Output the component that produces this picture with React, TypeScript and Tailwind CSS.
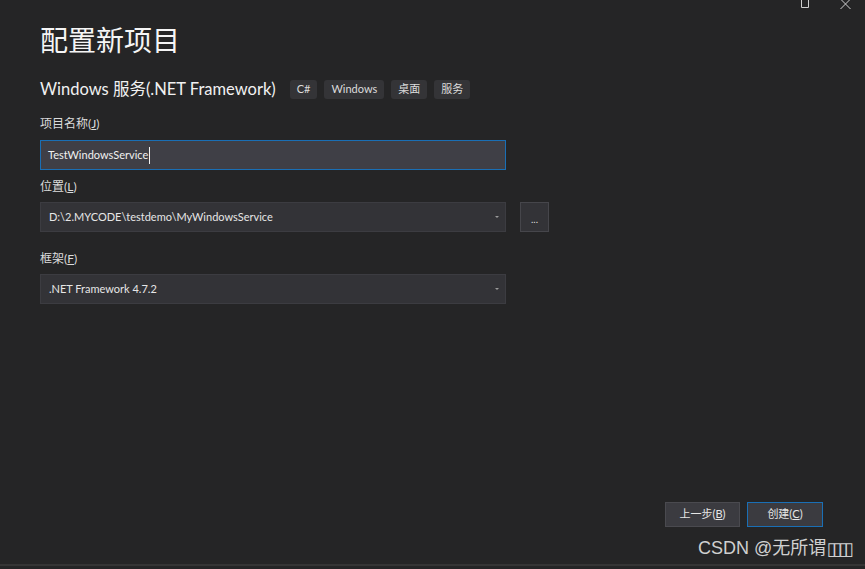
const font = "font-['Segoe_UI','Lato','Noto_Sans_CJK_SC',sans-serif]";

function Tag({ label }: { label: string }) {
  return (
    <span className="flex h-[19px] items-center rounded-[3px] bg-[#343437] px-[7px] text-[11px] text-[#dcdcdc]">
      {label}
    </span>
  );
}

function Caret() {
  return (
    <svg width="6" height="4" viewBox="0 0 6 4" className="mr-[5px]">
      <path d="M1 1h4L3 3z" fill="#9a9a9a" />
    </svg>
  );
}

function Select({ value }: { value: string }) {
  return (
    <div className="flex h-[30px] w-[466px] items-center justify-between border border-[#3c3c41] bg-[#333337] pl-[8px] text-[11px] text-[#e6e6e6]">
      <span>{value}</span>
      <Caret />
    </div>
  );
}

export default function App() {
  return (
    <div className={`${font} flex h-[569px] w-full flex-col bg-[#252526] text-[#f1f1f1]`}>
      {/* title bar controls */}
      <div className="flex h-[10px] items-start justify-end gap-[30px] pr-[14px]">
        <svg width="10" height="9" viewBox="0 0 10 9">
          <path d="M1.5 0v7.5h7V0" stroke="#cfcfcf" fill="none" />
        </svg>
        <svg width="11" height="9" viewBox="0 0 11 9">
          <path d="M0.5 -1l10 10M10.5 -1l-10 10" stroke="#cfcfcf" fill="none" />
        </svg>
      </div>

      <div className="flex flex-1 flex-col pl-[40px]">
        <h1 className="mt-[12px] text-[28px] leading-[36px] font-normal text-[#f5f5f5]">配置新项目</h1>

        <div className="mt-[19px] flex items-center">
          <span className="text-[16.5px] leading-[24px] text-[#f1f1f1]">Windows 服务(.NET Framework)</span>
          <div className="ml-[14px] flex gap-[7px]">
            <Tag label="C#" />
            <Tag label="Windows" />
            <Tag label="桌面" />
            <Tag label="服务" />
          </div>
        </div>

        <label className="mt-[15px] text-[12px] leading-[16px] text-[#dcdcdc]">
          项目名称(<span className="underline">J</span>)
        </label>
        <div className="mt-[8px] flex h-[30px] w-[466px] items-center border border-[#1a6fb5] bg-[#3f3f46] pl-[7px] text-[11px] text-[#f1f1f1]">
          <span>TestWindowsService</span>
          <span className="ml-[1px] h-[17px] w-px bg-[#f1f1f1]" />
        </div>

        <label className="mt-[9px] text-[12px] leading-[16px] text-[#dcdcdc]">
          位置(<span className="underline">L</span>)
        </label>
        <div className="mt-[7px] flex items-center gap-[14px]">
          <Select value="D:\2.MYCODE\testdemo\MyWindowsService" />
          <button className="flex h-[30px] w-[29px] items-end justify-center border border-[#46464b] bg-[#333337] pb-[7px] text-[10px] leading-[10px] text-[#dcdcdc]">
            ...
          </button>
        </div>

        <label className="mt-[19px] text-[12px] leading-[16px] text-[#dcdcdc]">
          框架(<span className="underline">F</span>)
        </label>
        <div className="mt-[7px]">
          <Select value=".NET Framework 4.7.2" />
        </div>

        <div className="flex-1" />

        <div className="flex justify-end gap-[7px] pr-[42px]">
          <button className="h-[25px] w-[75px] border border-[#4a4a4f] bg-[#3b3b40] text-[11px] text-[#e6e6e6]">
            上一步(<span className="underline">B</span>)
          </button>
          <button className="h-[25px] w-[76px] border border-[#1a6fb5] bg-[#3b3b40] text-[11px] text-[#e6e6e6]">
            创建(<span className="underline">C</span>)
          </button>
        </div>

        <div className="mt-[10px] flex h-[22px] items-center justify-end pr-[15px] font-['Liberation_Sans','Noto_Sans_CJK_SC',sans-serif] text-[18px] text-[#d0d0d0]">
          CSDN @无所谓<span className="font-['DejaVu_Sans',sans-serif] text-[18px] tracking-[-4px]">▯▯▯▯</span>
        </div>
      </div>

      <div className="mt-[5px] h-[2px] bg-[#353535]" />
      <div className="h-[3px]" />
    </div>
  );
}
